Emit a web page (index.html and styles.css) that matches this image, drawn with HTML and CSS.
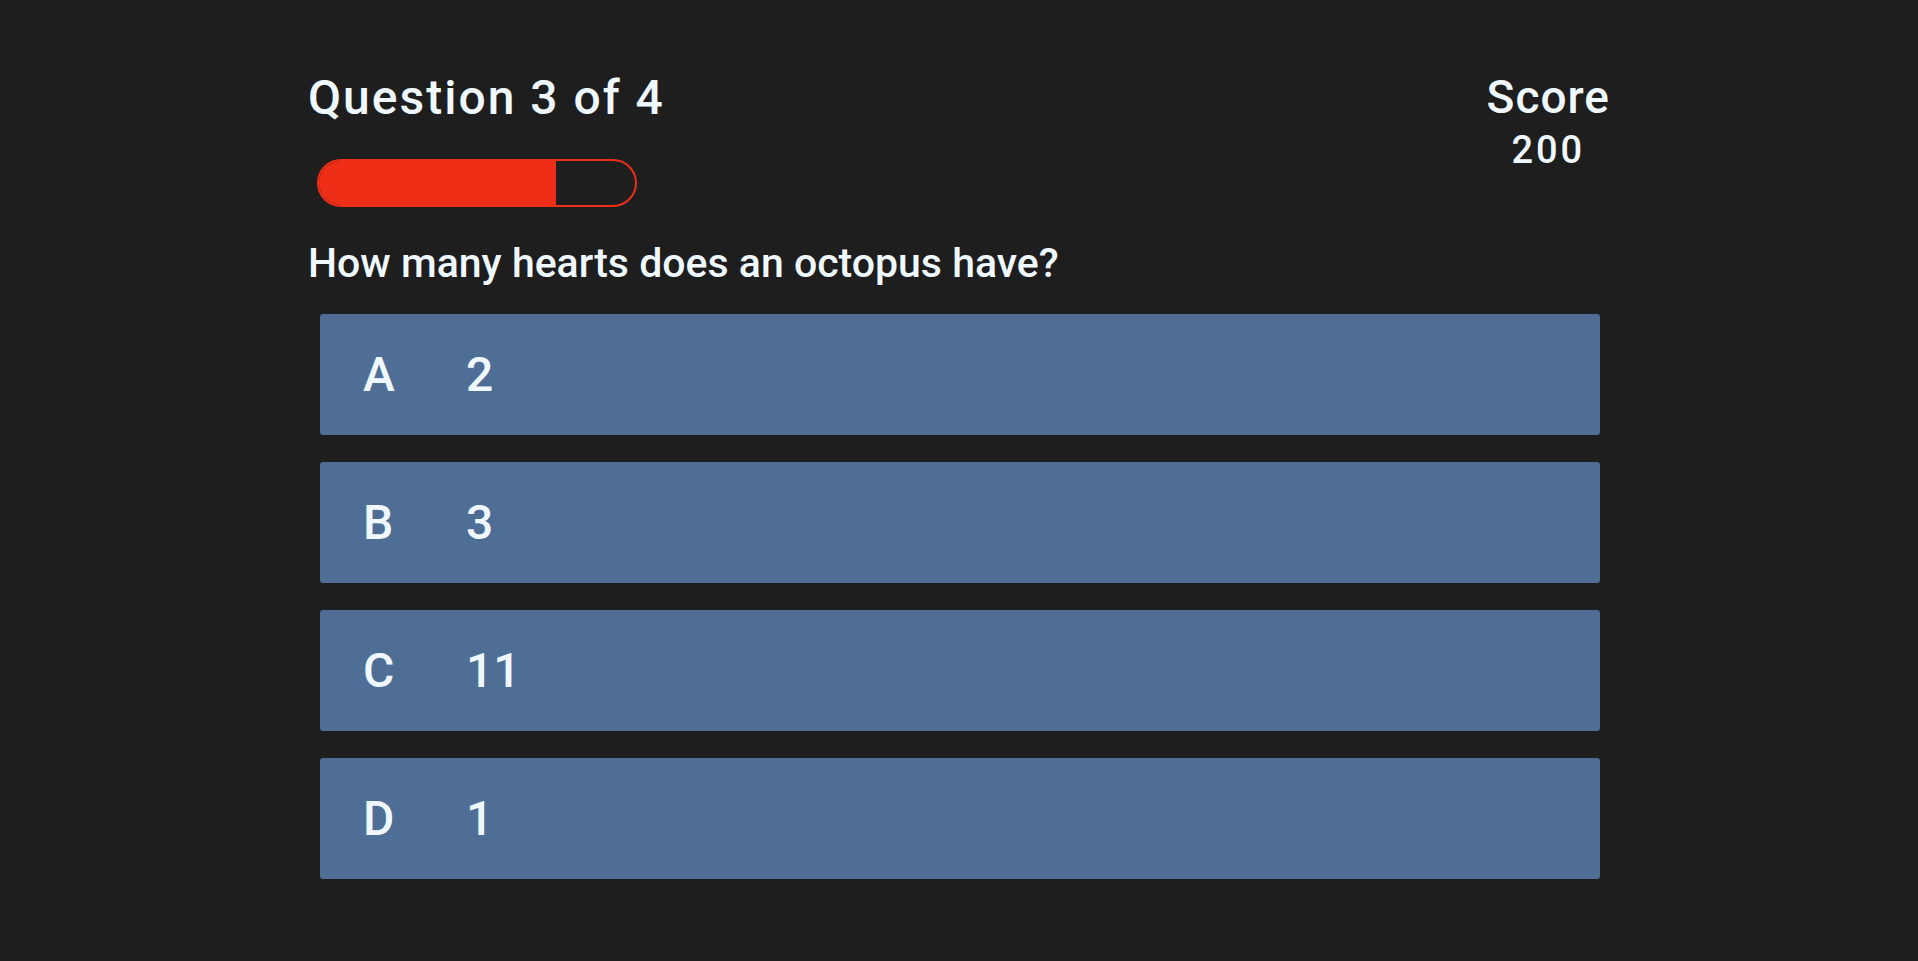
FILE: index.html
```html
<!DOCTYPE html>
<html lang="en">
<head>
<meta charset="utf-8">
<title>Quiz</title>
<link rel="stylesheet" href="styles.css">
</head>
<body>
<main class="quiz">
  <header class="quiz-header">
    <div class="progress-block">
      <h1 class="question-count">Question 3 of 4</h1>
      <div class="progress-bar">
        <div class="progress-fill" style="width: 75%"></div>
      </div>
    </div>
    <div class="score-block">
      <div class="score-label">Score</div>
      <div class="score-value">200</div>
    </div>
  </header>
  <section class="question-area">
    <h2 class="question-text">How many hearts does an octopus have?</h2>
    <div class="answers">
      <button class="answer"><span class="answer-letter">A</span><span class="answer-text">2</span></button>
      <button class="answer"><span class="answer-letter">B</span><span class="answer-text">3</span></button>
      <button class="answer"><span class="answer-letter">C</span><span class="answer-text">11</span></button>
      <button class="answer"><span class="answer-letter">D</span><span class="answer-text">1</span></button>
    </div>
  </section>
</main>
</body>
</html>
```
FILE: styles.css
```css
* {
  box-sizing: border-box;
}

html, body {
  margin: 0;
  padding: 0;
  background: #1e1e1e;
  color: #f0f8ff;
  font-family: Roboto, "Liberation Sans", Arial, sans-serif;
  font-weight: 500;
}

body {
  min-height: 961px;
}

.quiz {
  width: 1302px;
  margin: 0 auto;
  padding-top: 70px;
}

.quiz-header {
  display: flex;
  justify-content: space-between;
  align-items: flex-start;
}

.progress-block {
  display: flex;
  flex-direction: column;
  gap: 33px;
}

.question-count {
  margin: 0;
  font-size: 48px;
  line-height: 56px;
  font-weight: 500;
  letter-spacing: 2px;
}

.progress-bar {
  margin-left: 9px;
  width: 320px;
  height: 48px;
  border: 2px solid #ee2e17;
  border-radius: 24px;
  overflow: hidden;
}

.progress-fill {
  height: 100%;
  background: #ee2e17;
}

.score-block {
  display: flex;
  flex-direction: column;
  align-items: center;
  margin-top: -1px;
}

.score-label {
  font-size: 46px;
  line-height: 56px;
  letter-spacing: 1px;
}

.score-value {
  font-size: 38px;
  line-height: 50px;
  letter-spacing: 3px;
}

.question-area {
  margin-top: 32px;
  display: flex;
  flex-direction: column;
  gap: 27px;
}

.question-text {
  margin: 0;
  font-size: 41px;
  line-height: 48px;
  font-weight: 500;
  letter-spacing: 0;
}

.answers {
  display: flex;
  flex-direction: column;
  gap: 27px;
  margin: 0 10px 0 12px;
}

.answer {
  display: flex;
  align-items: center;
  height: 121px;
  padding: 0 0 0 43px;
  border: none;
  border-radius: 3px;
  background: #4e6e96;
  color: #f0f8ff;
  font-family: Roboto, "Liberation Sans", Arial, sans-serif;
  font-weight: 500;
  font-size: 48px;
  text-align: left;
}

.answer-letter {
  width: 103px;
}
```
